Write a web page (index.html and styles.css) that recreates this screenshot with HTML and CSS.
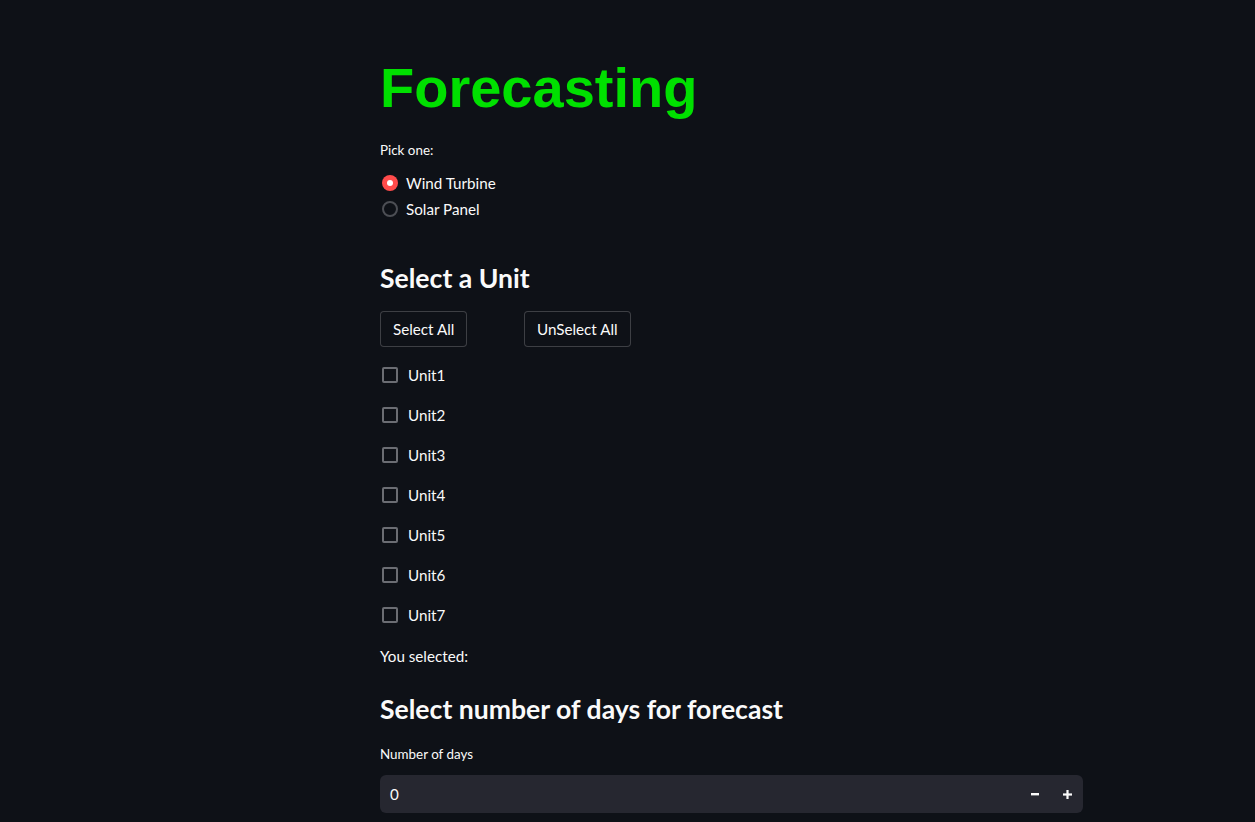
FILE: index.html
```html
<!DOCTYPE html>
<html>
<head>
<meta charset="utf-8">
<link rel="stylesheet" href="styles.css">
</head>
<body>
<main class="main">
  <h1 class="title">Forecasting</h1>
  <div class="label">Pick one:</div>
  <div class="radios">
    <div class="radio-row"><span class="radio checked"></span><span>Wind Turbine</span></div>
    <div class="radio-row"><span class="radio"></span><span>Solar Panel</span></div>
  </div>
  <h3 class="heading h-unit">Select a Unit</h3>
  <div class="buttons">
    <div class="col"><button class="btn">Select All</button></div>
    <div class="col"><button class="btn">UnSelect All</button></div>
  </div>
  <div class="checks">
    <div class="check-row"><span class="box"></span><span>Unit1</span></div>
    <div class="check-row"><span class="box"></span><span>Unit2</span></div>
    <div class="check-row"><span class="box"></span><span>Unit3</span></div>
    <div class="check-row"><span class="box"></span><span>Unit4</span></div>
    <div class="check-row"><span class="box"></span><span>Unit5</span></div>
    <div class="check-row"><span class="box"></span><span>Unit6</span></div>
    <div class="check-row"><span class="box"></span><span>Unit7</span></div>
  </div>
  <p class="text">You selected:</p>
  <h3 class="heading h-days">Select number of days for forecast</h3>
  <div class="label label-num">Number of days</div>
  <div class="number">
    <span class="num-value">0</span>
    <div class="steppers">
      <span class="step"><svg width="8" height="8" viewBox="0 0 8 8"><rect x="0" y="3" width="8" height="2.4" fill="#fafafa"/></svg></span>
      <span class="step"><svg width="9" height="9" viewBox="0 0 9 9"><rect x="0" y="3.4" width="9" height="2.2" fill="#fafafa"/><rect x="3.4" y="0" width="2.2" height="9" fill="#fafafa"/></svg></span>
    </div>
  </div>
</main>
</body>
</html>
```
FILE: styles.css
```css
html, body {
  margin: 0;
  padding: 0;
  background: #0e1117;
  color: #fafafa;
  font-family: "Source Sans Pro", Lato, "Noto Sans", sans-serif;
}
.main {
  width: 703px;
  margin-left: 380px;
  padding-top: 54px;
  display: flex;
  flex-direction: column;
}
.title {
  margin: 0;
  font-family: "Liberation Sans", Arial, sans-serif;
  font-weight: 700;
  font-size: 56px;
  line-height: 67px;
  color: #00e000;
}
.label {
  margin-top: 19px;
  font-size: 13.4px;
  line-height: 20px;
}
.radios {
  margin-top: 10px;
  display: flex;
  flex-direction: column;
}
.radio-row {
  height: 26px;
  display: flex;
  align-items: center;
  font-size: 15.2px;
}
.radio {
  width: 16px;
  height: 16px;
  box-sizing: border-box;
  border-radius: 50%;
  border: 2px solid #4c4e54;
  margin-left: 2px;
  margin-right: 8px;
  display: flex;
  align-items: center;
  justify-content: center;
}
.radio.checked {
  background: #ff4b4b;
  border: none;
}
.radio.checked::after {
  content: "";
  width: 6px;
  height: 6px;
  border-radius: 50%;
  background: #fff;
}
.heading {
  margin: 0;
  font-size: 26.6px;
  font-weight: 700;
  line-height: 34px;
}
.h-unit { margin-top: 39px; }
.buttons {
  margin-top: 16px;
  display: flex;
}
.col { width: 144px; }
.btn {
  height: 36px;
  padding: 0 12px;
  background: #0e1117;
  color: #fafafa;
  border: 1px solid rgba(250, 250, 250, 0.2);
  border-radius: 4px;
  font-family: inherit;
  font-size: 15.2px;
  line-height: 34px;
}
.checks {
  margin-top: 16px;
  display: flex;
  flex-direction: column;
  gap: 16px;
}
.check-row {
  height: 24px;
  display: flex;
  align-items: center;
  font-size: 15.2px;
}
.box {
  width: 16px;
  height: 16px;
  box-sizing: border-box;
  border: 2px solid #6b6d73;
  border-radius: 2px;
  margin-left: 2px;
  margin-right: 10px;
}
.text {
  margin: 17px 0 0;
  font-size: 15.2px;
  line-height: 24px;
}
.h-days { margin-top: 24px; }
.label-num { margin-top: 18px; }
.number {
  margin-top: 11px;
  height: 38px;
  background: #262730;
  border-radius: 6px;
  display: flex;
  align-items: center;
  justify-content: space-between;
  padding: 0 0 0 10px;
}
.num-value { font-size: 15.2px; }
.steppers { display: flex; height: 100%; }
.step {
  width: 32px;
  display: flex;
  align-items: center;
  justify-content: center;
}
```
